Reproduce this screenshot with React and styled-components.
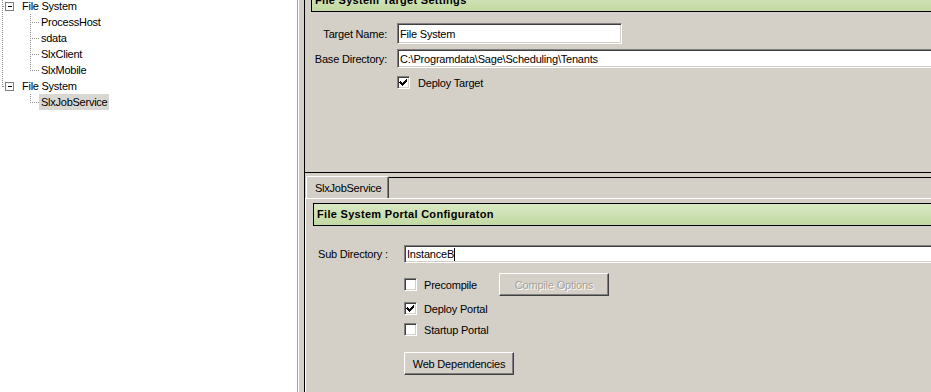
import React from "react";
import styled, { createGlobalStyle } from "styled-components";

const GlobalStyle = createGlobalStyle`
  html, body { margin: 0; padding: 0; overflow: hidden; background: #d4d0c8; }
  body { font-family: "Liberation Sans", Arial, sans-serif; font-size: 11px; color: #000; }
  * { box-sizing: border-box; }
`;

const Window = styled.div`
  display: flex;
  width: 931px;
  height: 392px;
  overflow: hidden;
  background: #d4d0c8;
`;

const TreePane = styled.div`
  width: 297px;
  flex: none;
  background: #fff;
  overflow: hidden;
`;

const TreeList = styled.div`
  margin-top: -2px;
  display: flex;
  flex-direction: column;
`;

const TreeRow = styled.div`
  display: flex;
  align-items: center;
  height: 16px;
`;

const TreeLabel = styled.span`
  height: 16px;
  line-height: 16px;
  padding: 0 2px;
  white-space: nowrap;
  letter-spacing: -0.25px;
  background: ${(p) => (p.$selected ? "#d9d7d1" : "transparent")};
  min-width: ${(p) => (p.$selected ? "70px" : "0")};
`;

const Splitter = styled.div`
  width: 7px;
  flex: none;
  border-left: 1px solid #a0a0a0;
  box-shadow: inset 1px 0 0 #fff;
  background: #d4d0c8;
`;

const RightPane = styled.div`
  flex: 1;
  min-width: 0;
  display: flex;
  flex-direction: column;
  border-left: 1px solid #000;
  background: #d4d0c8;
  overflow: hidden;
`;

const TopGroup = styled.div`
  height: 173px;
  flex: none;
  border-bottom: 1px solid #000;
  padding-left: 6px;
  overflow: hidden;
`;

const SectionHeader = styled.div`
  height: 23px;
  flex: none;
  margin-top: ${(p) => p.$top || "0"};
  width: 900px;
  border: 1px solid #000;
  background: linear-gradient(#d9e8c5, #c2d9a1);
  font-weight: bold;
  letter-spacing: 0.3px;
  line-height: 21px;
  padding-left: 3px;
  white-space: nowrap;
`;

const FormGrid = styled.div`
  display: grid;
  grid-template-columns: 82px auto;
  column-gap: 10px;
  margin-left: -6px;
  margin-top: 11px;
  align-items: center;
`;

const FieldLabel = styled.label`
  flex: none;
  width: ${(p) => p.$width || "auto"};
  margin-top: ${(p) => p.$mt || "0"};
  text-align: ${(p) => p.$align || "right"};
  white-space: nowrap;
  letter-spacing: -0.2px;
`;

const TextBox = styled.div`
  flex: none;
  width: ${(p) => p.$width};
  height: ${(p) => p.$height || "19px"};
  margin-top: ${(p) => p.$mt || "0"};
  background: #fff;
  border: 1px solid;
  border-color: #808080 #fff #fff #808080;
  box-shadow: inset 1px 1px 0 #404040, inset -1px -1px 0 #d4d0c8;
  padding-left: 2px;
  display: flex;
  align-items: center;
  white-space: nowrap;
  letter-spacing: -0.2px;
  overflow: hidden;
`;

const Caret = styled.span`
  display: inline-block;
  width: 1px;
  height: 13px;
  background: #000;
`;

const CheckRow = styled.div`
  display: flex;
  align-items: center;
  flex: none;
  width: ${(p) => p.$width || "auto"};
  gap: ${(p) => p.$gap || "7px"};
  height: ${(p) => p.$height || "17px"};
  margin-top: ${(p) => p.$mt || "0"};
  grid-column: ${(p) => p.$col || "auto"};
`;

const CheckBoxFrame = styled.span`
  width: 13px;
  height: 13px;
  flex: none;
  background: #fff;
  border: 1px solid;
  border-color: #808080 #fff #fff #808080;
  box-shadow: inset 1px 1px 0 #404040, inset -1px -1px 0 #d4d0c8;
  display: flex;
  align-items: center;
  justify-content: center;
`;

const CheckText = styled.span`
  white-space: nowrap;
  letter-spacing: -0.2px;
`;

const TabArea = styled.div`
  flex: 1;
  display: flex;
  flex-direction: column;
  min-height: 0;
`;

const TabStrip = styled.div`
  display: flex;
  padding: 3px 0 0 1px;
  height: 25px;
  flex: none;
  align-items: flex-end;
`;

const Tab = styled.div`
  height: 22px;
  padding: 0 7px 0 8px;
  border-top: 1px solid #fff;
  border-left: 1px solid #fff;
  border-right: 1px solid #404040;
  box-shadow: inset -1px 0 0 #808080;
  border-radius: 2px 2px 0 0;
  display: flex;
  align-items: center;
  letter-spacing: -0.25px;
  white-space: nowrap;
`;

const TabFill = styled.div`
  flex: 1;
  align-self: stretch;
  margin-top: 1px;
  border-top: 1px solid #000;
`;

const TabPage = styled.div`
  flex: 1;
  border-top: 1px solid #fff;
  border-left: 1px solid #fff;
  padding: 4px 0 0 7px;
  display: flex;
  flex-direction: column;
`;

const SubRow = styled.div`
  display: flex;
  align-items: center;
  margin-top: 19px;
  margin-left: 5px;
`;

const OptionsBlock = styled.div`
  display: flex;
  flex-direction: column;
  align-items: flex-start;
  margin-left: 91px;
  margin-top: 10px;
`;

const OptionLine = styled.div`
  display: flex;
  align-items: center;
  height: ${(p) => p.$height || "17px"};
  margin-top: ${(p) => p.$mt || "0"};
`;

const Button = styled.button`
  width: 110px;
  height: 23px;
  flex: none;
  margin-top: ${(p) => p.$mt || "0"};
  padding: 0;
  font-family: "Liberation Sans", Arial, sans-serif;
  font-size: 11px;
  letter-spacing: -0.2px;
  background: #d4d0c8;
  color: ${(p) => (p.disabled ? "#a3a199" : "#000")};
  text-shadow: ${(p) => (p.disabled ? "1px 1px 0 #fff" : "none")};
  border: 1px solid;
  border-color: #fff #404040 #404040 #fff;
  box-shadow: inset -1px -1px 0 #808080;
  border-radius: 0;
`;

const DOT = "#8c8c8c";

function Connector({ width, rootLine, box, childLine }) {
  return (
    <svg width={width} height="16" style={{ flex: "none", display: "block" }} shapeRendering="crispEdges">
      {rootLine && (
        <line x1="2.5" y1="0" x2="2.5" y2={rootLine === "half" ? 9 : 16} stroke={DOT} strokeDasharray="1 1" />
      )}
      {box && (
        <>
          <line x1="3" y1="8.5" x2="5" y2="8.5" stroke={DOT} strokeDasharray="1 1" />
          <rect x="5.5" y="4.5" width="8" height="8" fill="#fff" stroke="#808080" />
          <line x1="7.5" y1="8.5" x2="11.5" y2="8.5" stroke="#000" />
        </>
      )}
      {childLine && (
        <>
          <line x1="30.5" y1="0" x2="30.5" y2={childLine === "half" ? 9 : 16} stroke={DOT} strokeDasharray="1 1" />
          <line x1="32" y1="8.5" x2="39" y2="8.5" stroke={DOT} strokeDasharray="1 1" />
        </>
      )}
    </svg>
  );
}

function Check({ checked }) {
  return (
    <CheckBoxFrame>
      {checked && (
        <svg width="9" height="9" viewBox="0 0 9 9" shapeRendering="crispEdges">
          <path d="M1 3h1v1h1v1h1v-1h1v-1h1v-1h1v-1h1v3h-1v1h-1v1h-1v1h-1v1h-1v-1h-1v-1h-1v-1h-1z" fill="#000" />
        </svg>
      )}
    </CheckBoxFrame>
  );
}

const treeRows = [
  { label: "File System", kind: "root", rootLine: "full" },
  { label: "ProcessHost", kind: "child", rootLine: "full", childLine: "full" },
  { label: "sdata", kind: "child", rootLine: "full", childLine: "full" },
  { label: "SlxClient", kind: "child", rootLine: "full", childLine: "full" },
  { label: "SlxMobile", kind: "child", rootLine: "full", childLine: "half" },
  { label: "File System", kind: "root", rootLine: "half" },
  { label: "SlxJobService", kind: "child", childLine: "half", selected: true },
];

export default function App() {
  return (
    <>
      <GlobalStyle />
      <Window>
        <TreePane>
          <TreeList>
            {treeRows.map((r, i) => (
              <TreeRow key={i}>
                {r.kind === "root" ? (
                  <Connector width={20} rootLine={r.rootLine} box />
                ) : (
                  <Connector width={39} rootLine={r.rootLine} childLine={r.childLine} />
                )}
                <TreeLabel $selected={r.selected}>{r.label}</TreeLabel>
              </TreeRow>
            ))}
          </TreeList>
        </TreePane>
        <Splitter />
        <RightPane>
          <TopGroup>
            <SectionHeader $top="-11px">File System Target Settings</SectionHeader>
            <FormGrid>
              <FieldLabel>Target Name:</FieldLabel>
              <TextBox $width="225px" $height="21px">File System</TextBox>
              <FieldLabel $mt="5px">Base Directory:</FieldLabel>
              <TextBox $width="700px" $mt="5px">C:\Programdata\Sage\Scheduling\Tenants</TextBox>
              <CheckRow $col="2" $mt="8px" $height="13px" $gap="8px">
                <Check checked />
                <CheckText>Deploy Target</CheckText>
              </CheckRow>
            </FormGrid>
          </TopGroup>
          <TabArea>
            <TabStrip>
              <Tab>SlxJobService</Tab>
              <TabFill />
            </TabStrip>
            <TabPage>
              <SectionHeader>File System Portal Configuraton</SectionHeader>
              <SubRow>
                <FieldLabel $align="left" $width="86px">Sub Directory :</FieldLabel>
                <TextBox $width="600px" $height="18px">
                  InstanceB<Caret />
                </TextBox>
              </SubRow>
              <OptionsBlock>
                <OptionLine $height="23px">
                  <CheckRow $width="95px">
                    <Check />
                    <CheckText>Precompile</CheckText>
                  </CheckRow>
                  <Button disabled>Compile Options</Button>
                </OptionLine>
                <OptionLine $mt="4px">
                  <CheckRow>
                    <Check checked />
                    <CheckText>Deploy Portal</CheckText>
                  </CheckRow>
                </OptionLine>
                <OptionLine $mt="4px">
                  <CheckRow>
                    <Check />
                    <CheckText>Startup Portal</CheckText>
                  </CheckRow>
                </OptionLine>
                <Button $mt="14px">Web Dependencies</Button>
              </OptionsBlock>
            </TabPage>
          </TabArea>
        </RightPane>
      </Window>
    </>
  );
}
